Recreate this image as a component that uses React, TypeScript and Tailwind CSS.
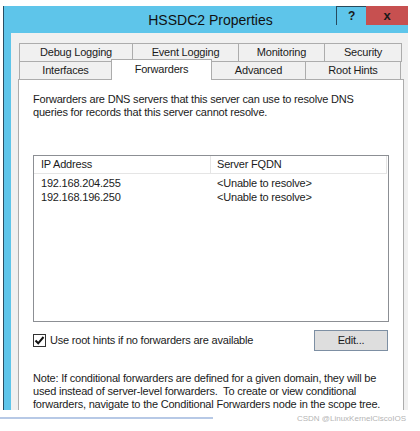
import React from "react";

const font = { fontFamily: '"Liberation Sans", Arial, sans-serif' };

function Tab({ label, w, selected = false, first = false }: { label: string; w: number; selected?: boolean; first?: boolean }) {
  if (selected) {
    return (
      <div
        className="relative z-10 -mt-[2px] -mb-px flex h-[21px] items-start justify-center border border-b-0 border-[#acacac] bg-white pt-[3px] -ml-px"
        style={{ width: w + 1 }}
      >
        {label}
      </div>
    );
  }
  return (
    <div
      className={`flex h-[19px] items-center justify-center border border-[#acacac] bg-[#f0f0f0] ${first ? "" : "-ml-px"}`}
      style={{ width: first ? w : w + 1 }}
    >
      {label}
    </div>
  );
}

export default function App() {
  return (
    <div className="relative h-[431px] w-[420px] overflow-hidden bg-white text-[11px] leading-[13px] tracking-[-0.2px] text-[#1b1b1b]" style={font}>
      {/* window */}
      <div className="ml-[3px] mt-[6px] flex h-[404px] w-[405px] flex-col overflow-hidden border-l border-[#2a4e63] bg-[#5ec5ea]">
        {/* title bar */}
        <div className="flex h-[27px] shrink-0 pl-[9px]">
          <div className="flex-1" />
          <div className="pt-[5px] text-[14px] leading-[18px] tracking-normal text-[#111]">HSSDC2 Properties</div>
          <div className="flex flex-1 items-start justify-end">
            <div className="flex h-[19px] w-[30px] items-center justify-center border border-b-0 border-r-0 border-[#264a5e] text-[12px] font-bold text-[#1a1a1a]">?</div>
            <div className="flex h-[19px] w-[42px] items-center justify-center bg-[#c75050] text-[13px] font-bold text-[#1a1a1a]">x</div>
          </div>
        </div>
        {/* content */}
        <div className="ml-[7px] flex flex-1 flex-col bg-[#f0f0f0] pl-[7px] pt-[10px]">
          <div className="flex shrink-0 flex-col pl-px">
            <div className="flex">
              <Tab label="Debug Logging" w={114} first />
              <Tab label="Event Logging" w={106} />
              <Tab label="Monitoring" w={86} />
              <Tab label="Security" w={77} />
            </div>
            <div className="-mt-px flex">
              <Tab label="Interfaces" w={93} first />
              <Tab label="Forwarders" w={100} selected />
              <Tab label="Advanced" w={94} />
              <Tab label="Root Hints" w={95} />
            </div>
          </div>
          {/* panel */}
          <div className="-mt-px flex h-[340px] w-[386px] shrink-0 flex-col border border-[#acacac] bg-white pl-[14px] pt-[13px]">
            <div className="shrink-0 leading-[13px]">
              Forwarders are DNS servers that this server can use to resolve DNS
              <br />
              queries for records that this server cannot resolve.
            </div>
            {/* list */}
            <div className="mt-[36px] flex h-[167px] w-[356px] shrink-0 flex-col border border-[#8c8f94] bg-white">
              <div className="flex h-[18px] w-[353px] border-b border-[#e5e5e5]">
                <div className="flex w-[177px] items-center border-r border-[#e5e5e5] pl-[7px]">IP Address</div>
                <div className="flex flex-1 items-center border-r border-[#e5e5e5] pl-[6px]">Server FQDN</div>
              </div>
              <div className="pt-[2px]">
                {[
                  ["192.168.204.255", "<Unable to resolve>"],
                  ["192.168.196.250", "<Unable to resolve>"],
                ].map(([ip, fq]) => (
                  <div key={ip} className="flex h-[14px] items-center">
                    <div className="w-[177px] pl-[7px]">{ip}</div>
                    <div className="pl-[6px]">{fq}</div>
                  </div>
                ))}
              </div>
            </div>
            {/* checkbox + edit */}
            <div className="mt-[8px] flex h-[21px] w-[356px] shrink-0 items-center justify-between">
              <div className="flex items-center">
                <div className="flex h-[13px] w-[13px] items-center justify-center border border-[#333] bg-white">
                  <svg width="11" height="11" viewBox="0 0 11 11">
                    <path d="M1.5 5.5 L4.2 8.3 L9.5 2" fill="none" stroke="#111" strokeWidth="2" />
                  </svg>
                </div>
                <span className="ml-[4px]">Use root hints if no forwarders are available</span>
              </div>
              <div className="mr-px flex h-[21px] w-[74px] items-center justify-center border border-[#7d8fa3] bg-[#dedede]">Edit...</div>
            </div>
            <div className="mt-[21px] shrink-0 whitespace-nowrap leading-[13px]">
              Note: If conditional forwarders are defined for a given domain, they will be
              <br />
              used instead of server-level forwarders.&nbsp; To create or view conditional
              <br />
              forwarders, navigate to the Conditional Forwarders node in the scope tree.
            </div>
          </div>
        </div>
      </div>
      {/* below */}
      <div className="mt-[7px] flex items-start justify-between pr-[14px]">
        <div className="h-[2px] w-[213px] bg-[#b7c9e6]" />
        <div className="-mt-[3px] text-[8px] leading-[10px] tracking-normal text-[#b5b5b5]">CSDN @LinuxKernelCiscoIOS</div>
      </div>
    </div>
  );
}
